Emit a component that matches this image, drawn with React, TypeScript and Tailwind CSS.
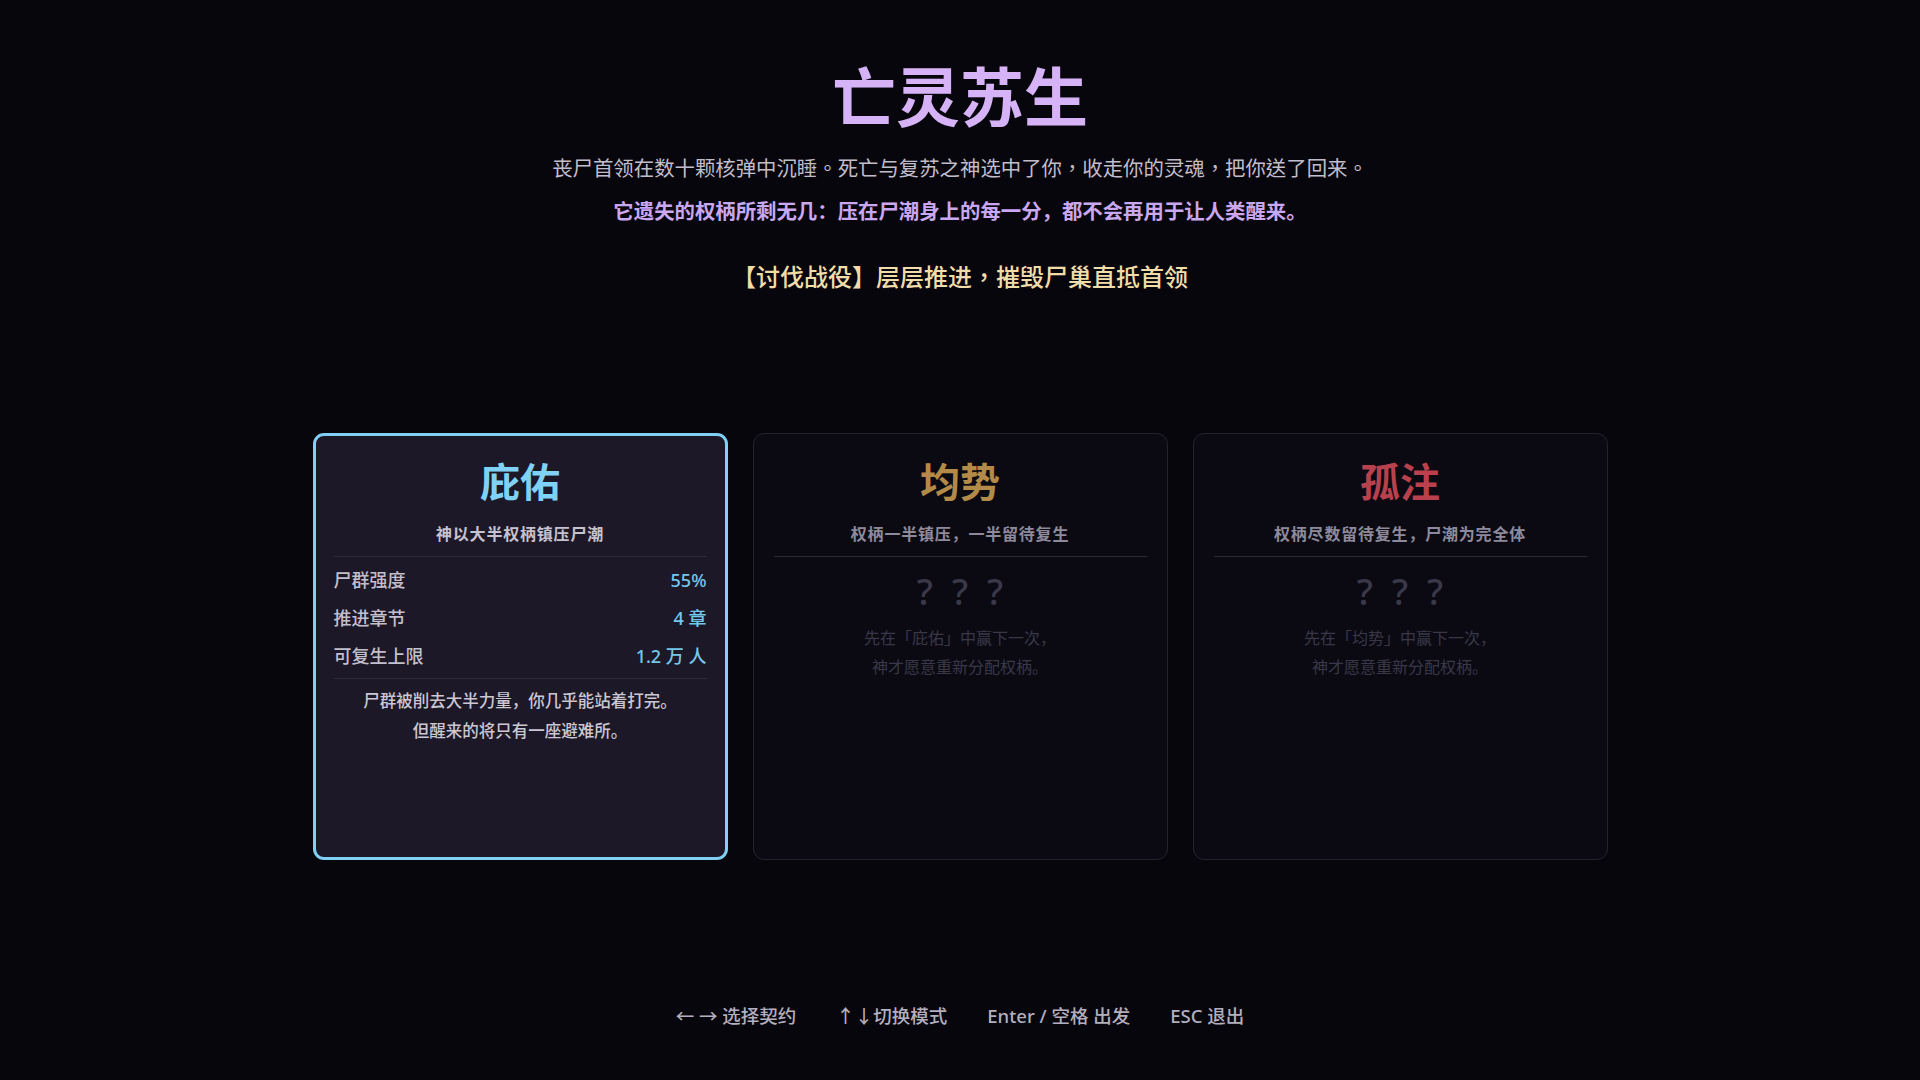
import React from "react";

const FONT = { fontFamily: '"Noto Sans", "Noto Sans CJK SC", sans-serif' };
const TC = { fontFamily: '"Noto Sans CJK TC", "Noto Sans CJK SC", sans-serif' };

type Mode = {
  id: string;
  name: string;
  tagline: string;
  color: string;
  locked: boolean;
  hint?: string;
};

const modes: Mode[] = [
  { id: "bless", name: "庇佑", tagline: "神以大半权柄镇压尸潮", color: "text-[#7fd2f6]", locked: false },
  { id: "balance", name: "均势", tagline: "权柄一半镇压，一半留待复生", color: "text-[#b48a48]", locked: true, hint: "先在「庇佑」中赢下一次，" },
  { id: "allin", name: "孤注", tagline: "权柄尽数留待复生，尸潮为完全体", color: "text-[#b8414d]", locked: true, hint: "先在「均势」中赢下一次，" },
];

const stats = [
  { label: "尸群强度", value: "55%" },
  { label: "推进章节", value: "4 章" },
  { label: "可复生上限", value: "1.2 万 人" },
];

function ModeCard({ mode, selected }: { mode: Mode; selected: boolean }) {
  return (
    <div
      className={
        selected
          ? "w-[415px] h-[427px] rounded-[11px] border-[3px] border-[#7fd0f4] bg-[#1d1827] px-[18px] pt-[24px] flex flex-col"
          : "w-[415px] h-[427px] rounded-[11px] border border-[#24222f] bg-[#0b0a13] px-[20px] pt-[26px] flex flex-col"
      }
    >
      <div className={`text-center text-[40px] leading-[44px] font-bold ${mode.color}`}>{mode.name}</div>
      <div
        className={`mt-[18px] text-center text-[16px] leading-[24px] font-bold tracking-[0.05em] ${
          selected ? "text-[#c6c2d0]" : "text-[#8e8a9c]"
        }`}
      >
        {mode.tagline}
      </div>
      <div className="mt-[10px] h-px bg-[#2e2a3a]" />

      {mode.locked ? (
        <>
          <div className="mt-[13px] h-[44px] flex items-center justify-center gap-[19px] text-[36px] font-medium text-[#3b3949]">
            <span>?</span>
            <span>?</span>
            <span>?</span>
          </div>
          <div className="mt-[10px] text-center text-[16px] leading-[29px] text-[#3a3848]">
            <div>{mode.hint}</div>
            <div>神才愿意重新分配权柄。</div>
          </div>
        </>
      ) : (
        <>
          <div className="pt-[4px] flex flex-col">
            {stats.map((s) => (
              <div key={s.label} className="h-[38px] flex items-center justify-between">
                <span className="text-[18px] font-medium text-[#c3bfcc]">{s.label}</span>
                <span className="text-[18px] font-medium text-[#74c8ee]">{s.value}</span>
              </div>
            ))}
          </div>
          <div className="mt-[3px] h-px bg-[#2e2a3a]" />
          <div className="mt-[7px] text-center text-[16.5px] leading-[30px] text-[#cbc7d3] font-medium">
            <div>尸群被削去大半力量，你几乎能站着打完。</div>
            <div>但醒来的将只有一座避难所。</div>
          </div>
        </>
      )}
    </div>
  );
}

export default function App() {
  const selected = "bless";

  return (
    <div className="w-[1920px] h-[1080px] bg-[#08060d] flex flex-col items-center pt-[58px] overflow-hidden" style={FONT}>
      <h1 className="text-[64px] leading-[78px] font-bold text-[#d6b3f7]">亡灵苏生</h1>

      <div className="mt-[9px] text-center leading-[44px]">
        <div className="text-[20.4px] text-[#c2bdca]" style={TC}>
          丧尸首领在数十颗核弹中沉睡。死亡与复苏之神选中了你，收走你的灵魂，把你送了回来。
        </div>
        <div className="text-[20.4px] font-semibold text-[#c9a7f1]">
          它遗失的权柄所剩无几：压在尸潮身上的每一分，都不会再用于让人类醒来。
        </div>
      </div>

      <div className="mt-[27px] text-[24px] leading-[32px] font-medium text-[#f1dda9]" style={TC}>
        【讨伐战役】层层推进，摧毁尸巢直抵首领
      </div>

      <div className="mt-[141px] flex gap-[25px]">
        {modes.map((m) => (
          <ModeCard key={m.id} mode={m} selected={m.id === selected} />
        ))}
      </div>

      <div className="mt-[142px] flex gap-10 text-[18.5px] leading-[28px] font-medium text-[#b3afbe]">
        <span>← → 选择契约</span>
        <span>↑↓切换模式</span>
        <span>Enter / 空格 出发</span>
        <span>ESC 退出</span>
      </div>
    </div>
  );
}
